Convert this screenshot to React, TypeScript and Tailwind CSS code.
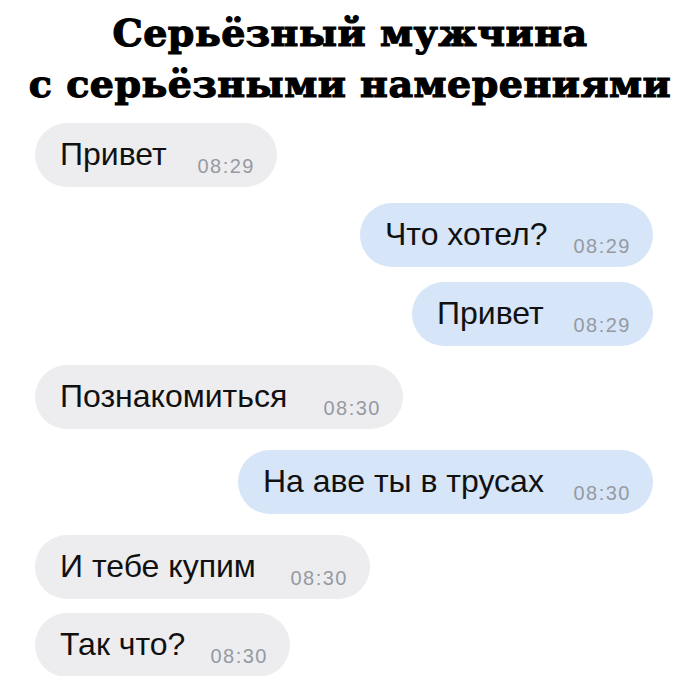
import React from "react";

type Msg = { text: string; time: string; mine: boolean; mt: string; w: string };

const messages: Msg[] = [
  { text: "Привет", time: "08:29", mine: false, mt: "mt-[14px]", w: "w-[242px]" },
  { text: "Что хотел?", time: "08:29", mine: true, mt: "mt-[16px]", w: "w-[293px]" },
  { text: "Привет", time: "08:29", mine: true, mt: "mt-[15px]", w: "w-[241px]" },
  { text: "Познакомиться", time: "08:30", mine: false, mt: "mt-[19px]", w: "w-[368px]" },
  { text: "На аве ты в трусах", time: "08:30", mine: true, mt: "mt-[21px]", w: "w-[415px]" },
  { text: "И тебе купим", time: "08:30", mine: false, mt: "mt-[21px]", w: "w-[335px]" },
  { text: "Так что?", time: "08:30", mine: false, mt: "mt-[14px]", w: "w-[255px]" },
];

function Bubble({ m }: { m: Msg }) {
  return (
    <div className={"flex " + (m.mine ? "justify-end pr-[47px]" : "justify-start pl-[35px]") + " " + m.mt}>
      <div
        className={
          "flex h-[64px] items-start justify-between rounded-full pl-[25px] pr-[22px] " +
          m.w +
          " " +
          (m.mine ? "bg-[#d6e5f8]" : "bg-[#ededf0]")
        }
      >
        <span className="pt-[15px] text-[32px] leading-none text-[#111]">{m.text}</span>
        <span className="pt-[33px] text-[20px] leading-none tracking-[1.5px] text-[#959aa2]">
          {m.time}
        </span>
      </div>
    </div>
  );
}

export default function App() {
  return (
    <div
      className="h-[676px] w-[700px] overflow-hidden bg-white"
      style={{ fontFamily: "'Liberation Sans', Arial, sans-serif" }}
    >
      <h1 className="pt-[7px] text-center text-[38px] font-bold leading-[51px] tracking-[0.5px] text-black [-webkit-text-stroke:1.2px_#000] [font-family:'DejaVu_Serif',serif]">
        Серьёзный мужчина
        <br />
        с серьёзными намерениями
      </h1>
      <div className="flex flex-col">
        {messages.map((m, i) => (
          <Bubble key={i} m={m} />
        ))}
      </div>
    </div>
  );
}
